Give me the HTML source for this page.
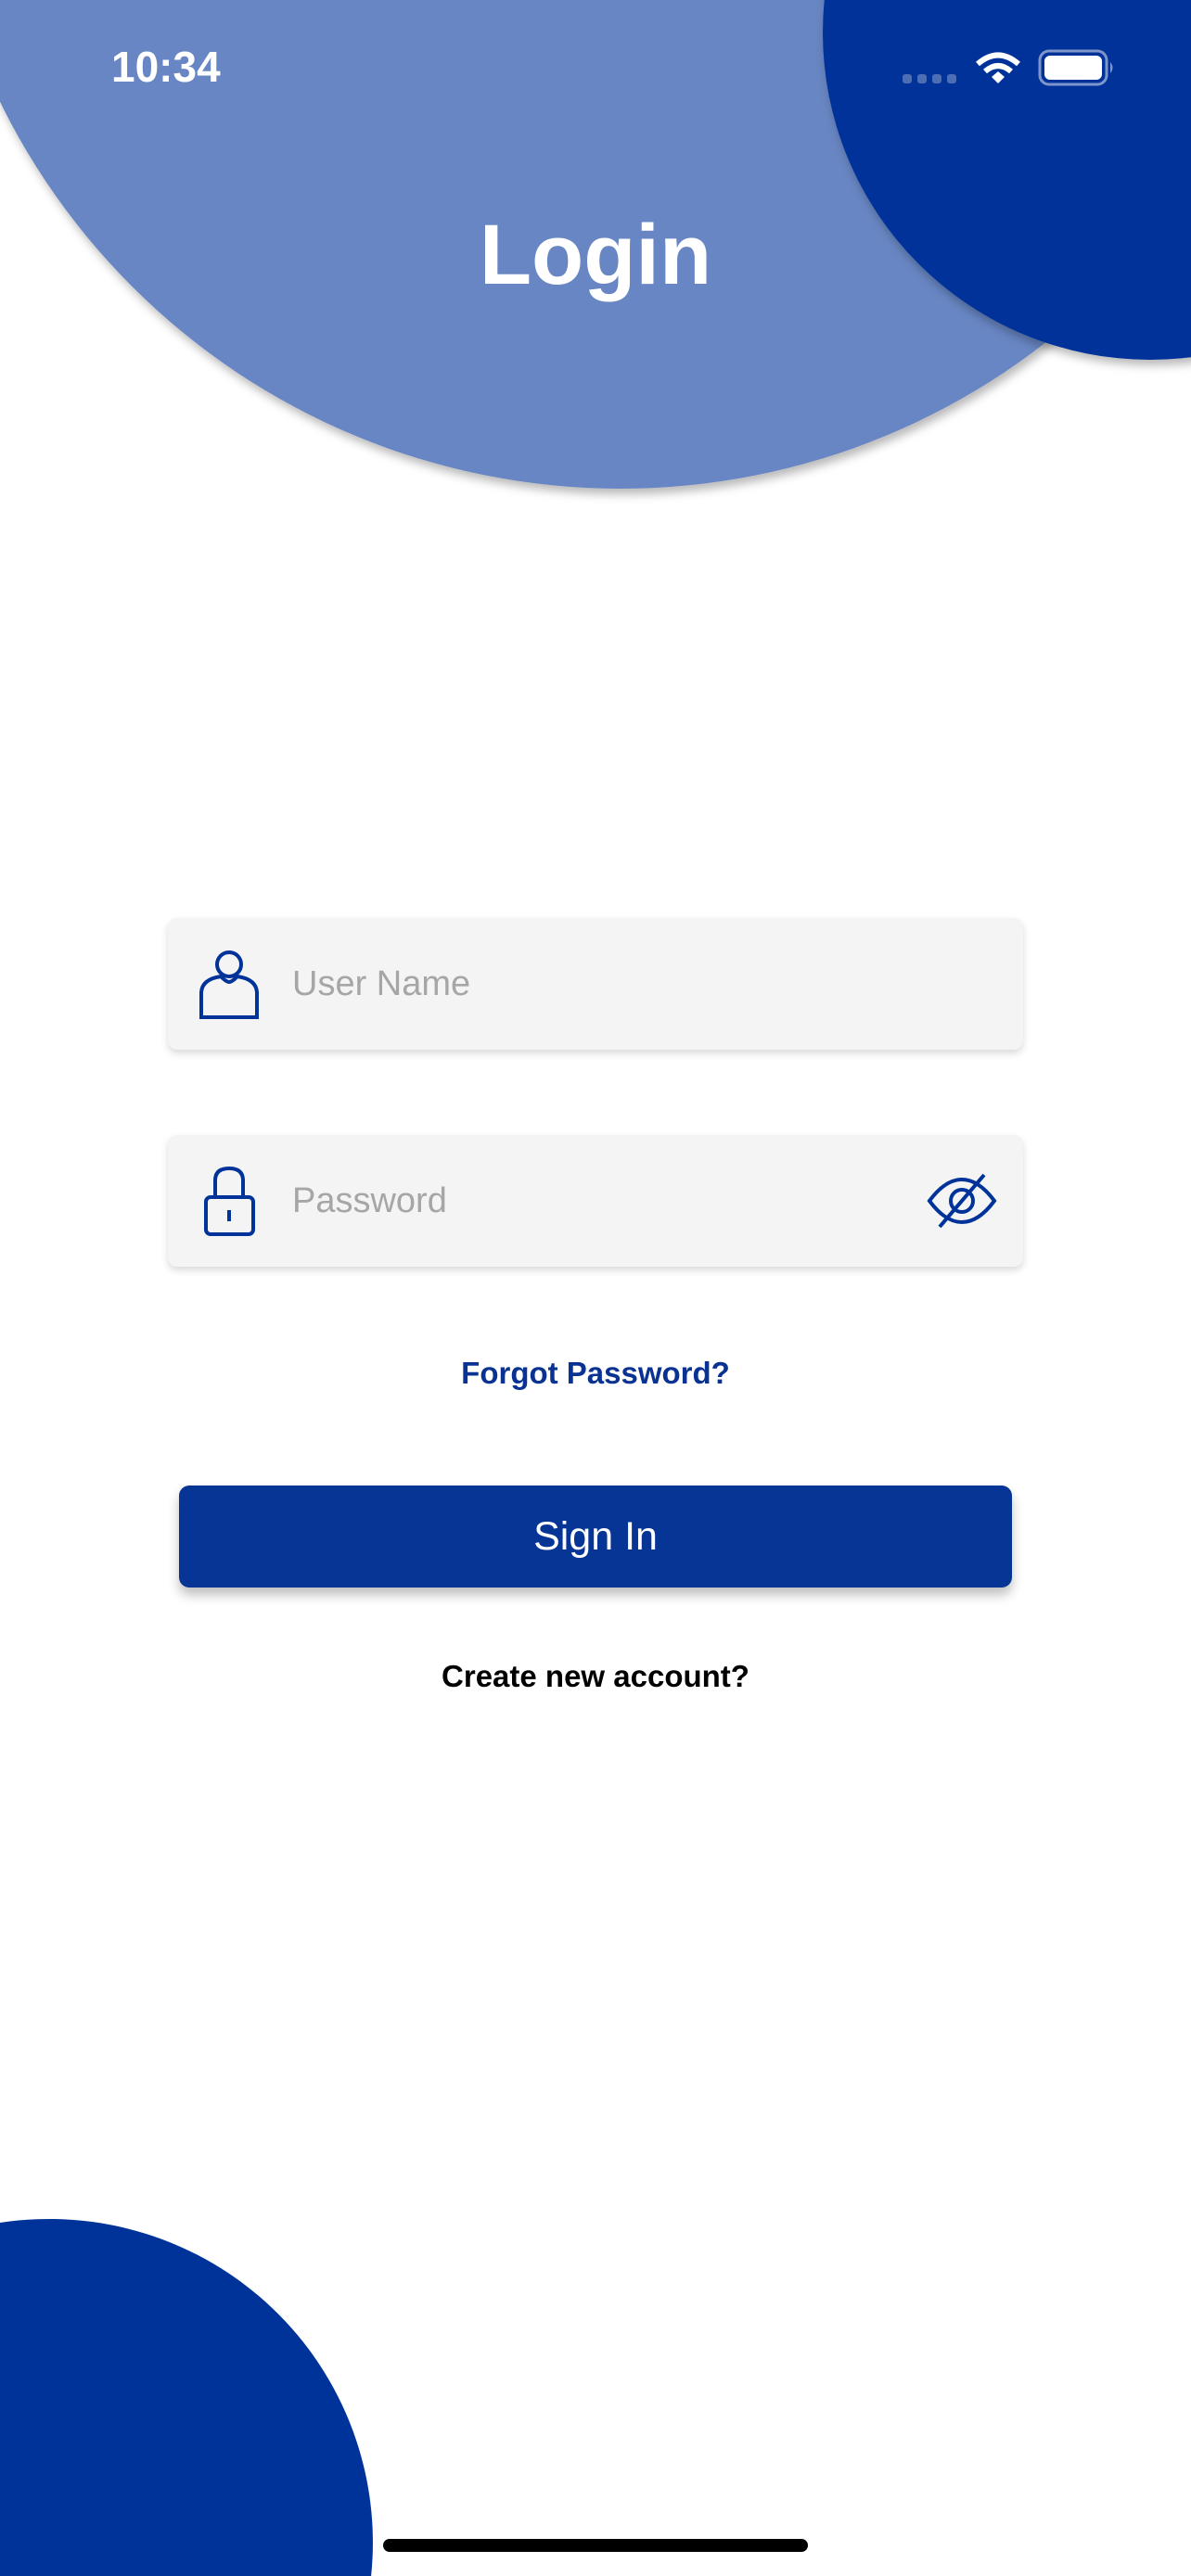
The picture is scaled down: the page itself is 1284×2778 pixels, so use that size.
<!DOCTYPE html>
<html><head><meta charset="utf-8">
<style>
html,body{margin:0;padding:0;width:1284px;height:2778px;overflow:hidden;background:#fff;}
#wrap{width:1284px;height:2778px;position:relative;overflow:hidden;background:#fff;font-family:"Liberation Sans",sans-serif;}
.field{position:absolute;left:181px;width:922px;height:142px;background:#f4f4f4;border-radius:10px;box-shadow:0 4px 8px rgba(0,0,0,0.15);}
.ph{position:absolute;left:134px;top:0;line-height:142px;font-size:38px;color:#a6a6a6;}
.abs{position:absolute;}
</style></head><body><div id="wrap">
<svg class="abs" style="left:0;top:0;display:block" width="1284" height="2778" viewBox="0 0 1284 2778">
<defs>
<filter id="sh" x="-10%" y="-10%" width="120%" height="120%"><feDropShadow dx="3" dy="6" stdDeviation="5" flood-color="#000" flood-opacity="0.28"/></filter>
</defs>
<circle cx="669" cy="-218" r="745" fill="#6886c3" filter="url(#sh)"/>
<circle cx="1240" cy="35" r="353" fill="#003399" filter="url(#sh)"/>
<path d="M0 2778 H400.1 A349 349 0 0 0 0 2397 Z" fill="#003399"/>
</svg>

<div class="abs" style="left:120px;top:44px;font-size:46px;font-weight:bold;color:#fff;line-height:56px;">10:34</div>
<svg class="abs" style="left:970px;top:52px" width="240" height="44" viewBox="0 0 240 44">
<g fill="#4d6db5"><rect x="3" y="28" width="10" height="10" rx="3"/><rect x="19" y="28" width="10" height="10" rx="3"/><rect x="35" y="28" width="10" height="10" rx="3"/><rect x="51" y="28" width="10" height="10" rx="3"/></g>
<g fill="none" stroke="#fff" stroke-width="6"><path d="M84 17 Q106 -2 128 17"/><path d="M92 25 Q106 13 120 25"/></g>
<path d="M99 31 L106 25 L113 31 L106 38 Z" fill="#fff"/>
<rect x="151" y="3" width="72" height="36" rx="10" fill="none" stroke="#7e95cc" stroke-width="3"/>
<rect x="156" y="8" width="62" height="26" rx="6" fill="#fff"/>
<path d="M227 15 Q232 21 227 27 Z" fill="#7e95cc"/>
</svg>

<div class="abs" style="left:0;width:1284px;top:215px;text-align:center;font-size:92px;font-weight:bold;color:#fff;line-height:120px;">Login</div>

<div class="field" style="top:990px;">
<svg class="abs" style="left:33px;top:34px" width="66" height="76" viewBox="0 0 66 76"><g fill="none" stroke="#003399" stroke-width="4"><circle cx="33" cy="16" r="13"/><path d="M24 29 Q30 35 33 35 Q36 35 42 29 Q62 32 63 46 V73 H3 V46 Q4 32 24 29 Z"/></g></svg>
<div class="ph">User Name</div>
</div>
<div class="field" style="top:1224px;">
<svg class="abs" style="left:38px;top:33px" width="58" height="78" viewBox="0 0 58 78"><g fill="none" stroke="#003399" stroke-width="4"><path d="M13 34 V16 Q13 3 28 3 Q43 3 43 16 V34"/><rect x="3" y="34" width="51" height="40" rx="5"/></g><rect x="26" y="48" width="4" height="12" fill="#003399"/></svg>
<div class="ph">Password</div>
<svg class="abs" style="left:818px;top:40px" width="76" height="62" viewBox="0 0 76 62"><g fill="none" stroke="#003399" stroke-width="4"><path d="M3 31 Q20 8 38 8 Q56 8 73 31 Q56 54 38 54 Q20 54 3 31 Z"/><circle cx="38" cy="31" r="12"/><path d="M62 3 L14 59"/></g></svg>
</div>

<div class="abs" style="left:0;width:1284px;top:1458px;text-align:center;font-size:33px;font-weight:bold;color:#0a3292;line-height:46px;">Forgot Password?</div>

<div class="abs" style="left:193px;top:1602px;width:898px;height:110px;background:#063595;border-radius:11px;box-shadow:0 8px 12px rgba(0,0,0,0.25);color:#fff;font-size:43px;text-align:center;line-height:110px;">Sign In</div>

<div class="abs" style="left:0;width:1284px;top:1785px;text-align:center;font-size:33px;font-weight:bold;color:#000;line-height:46px;">Create new account?</div>

<div class="abs" style="left:413px;top:2738px;width:458px;height:14px;border-radius:7px;background:#000;"></div>
</div></body></html>
